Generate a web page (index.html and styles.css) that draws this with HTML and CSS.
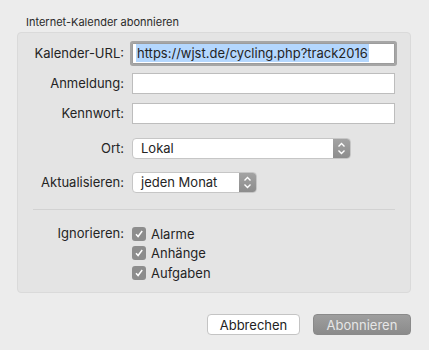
FILE: index.html
```html
<!DOCTYPE html>
<html>
<head>
  <title>Internet-Kalender abonnieren</title>
  <meta name="viewport" content="width=device-width, initial-scale=1.0">
  <link rel="stylesheet" href="styles.css">
</head>
<body>
  <div class="dialog">
    <div class="group-title">Internet-Kalender abonnieren</div>

    <!-- Group box -->
    <div class="group">
      <div class="row row-url">
        <label class="label">Kalender-URL:</label>
        <div class="field focused"><span class="selected">https://wjst.de/cycling.php?track2016</span></div>
      </div>
      <div class="row">
        <label class="label">Anmeldung:</label>
        <div class="field"></div>
      </div>
      <div class="row">
        <label class="label">Kennwort:</label>
        <div class="field"></div>
      </div>

      <div class="row row-popup">
        <label class="label">Ort:</label>
        <div class="popup popup-wide">
          <span class="popup-value">Lokal</span>
          <span class="stepper">
            <svg width="9" height="13" viewBox="0 0 9 13"><path d="M1.5 4.5 L4.5 1.5 L7.5 4.5 M1.5 8.5 L4.5 11.5 L7.5 8.5" fill="none" stroke="#fff" stroke-width="1.4"/></svg>
          </span>
        </div>
      </div>
      <div class="row row-popup2">
        <label class="label">Aktualisieren:</label>
        <div class="popup popup-narrow">
          <span class="popup-value">jeden Monat</span>
          <span class="stepper">
            <svg width="9" height="13" viewBox="0 0 9 13"><path d="M1.5 4.5 L4.5 1.5 L7.5 4.5 M1.5 8.5 L4.5 11.5 L7.5 8.5" fill="none" stroke="#fff" stroke-width="1.4"/></svg>
          </span>
        </div>
      </div>

      <div class="separator"></div>

      <div class="row row-check">
        <label class="label">Ignorieren:</label>
        <div class="checks">
          <div class="check">
            <span class="box"><svg width="10" height="10" viewBox="0 0 10 10"><path d="M2 5.2 L4.1 7.5 L8.2 2" fill="none" stroke="#fff" stroke-width="1.5"/></svg></span>
            Alarme
          </div>
          <div class="check">
            <span class="box"><svg width="10" height="10" viewBox="0 0 10 10"><path d="M2 5.2 L4.1 7.5 L8.2 2" fill="none" stroke="#fff" stroke-width="1.5"/></svg></span>
            Anhänge
          </div>
          <div class="check">
            <span class="box"><svg width="10" height="10" viewBox="0 0 10 10"><path d="M2 5.2 L4.1 7.5 L8.2 2" fill="none" stroke="#fff" stroke-width="1.5"/></svg></span>
            Aufgaben
          </div>
        </div>
      </div>
    </div>

    <!-- Buttons -->
    <div class="buttons">
      <button class="btn btn-cancel">Abbrechen</button>
      <button class="btn btn-default" disabled>Abonnieren</button>
    </div>
  </div>
</body>
</html>
```

FILE: styles.css
```css
/* Base */
* {
  box-sizing: border-box;
}

body, html {
  margin: 0;
  padding: 0;
  height: 100%;
  background: #ececec;
  font-family: Inter, 'Liberation Sans', Arial, sans-serif;
  font-size: 13px;
  color: #242424;
  overflow: hidden;
}

.dialog {
  padding: 0 18px 0 17px;
}

.group-title {
  font-size: 11px;
  color: #2a2a2a;
  padding: 15px 0 0 9px;
  height: 32px;
}

/* Group box */
.group {
  height: 261px;
  border: 1px solid #dadada;
  border-radius: 4px;
  background: #e4e4e4;
  padding-top: 9px;
}

.row {
  display: flex;
  align-items: center;
  height: 22px;
  margin-top: 8px;
}

.row-url {
  margin-top: 0;
}

.label {
  width: 107px;
  padding-right: 1px;
  text-align: right;
  flex-shrink: 0;
}

.field {
  margin-left: 7px;
  width: 263px;
  height: 21px;
  background: #fff;
  border: 1px solid #bdbdbd;
  display: flex;
  align-items: center;
  padding-left: 3px;
  white-space: nowrap;
  overflow: hidden;
}

.field.focused {
  border-color: #9c9c9c;
  box-shadow: 0 0 0 2px #a6a6a6;
  border-radius: 1px;
}

.selected {
  background: #b4d7fe;
  padding: 1px 1px;
  line-height: 16px;
}

/* Popups */
.row-popup {
  margin-top: 13px;
}

.row-popup2 {
  margin-top: 12px;
}

.popup {
  margin-left: 7px;
  height: 21px;
  display: flex;
  background: #fff;
  border: 1px solid #c6c6c6;
  border-radius: 4px;
  overflow: hidden;
}

.popup-wide {
  width: 219px;
}

.popup-narrow {
  width: 125px;
}

.popup-value {
  flex: 1;
  padding-left: 8px;
  line-height: 19px;
}

.stepper {
  width: 17px;
  background: linear-gradient(#a3a3a3, #8d8d8d);
  display: flex;
  align-items: center;
  justify-content: center;
}

.separator {
  margin: 16px 15px 0 15px;
  height: 1px;
  background: #d2d2d2;
}

/* Checkboxes */
.row-check {
  height: auto;
  align-items: flex-start;
  margin-top: 14px;
}

.row-check .label {
  line-height: 19px;
}

.checks {
  margin-left: 7px;
}

.check {
  display: flex;
  align-items: center;
  height: 19.5px;
}

.box {
  width: 14px;
  height: 14px;
  border-radius: 3px;
  background: #8d8d8d;
  display: inline-flex;
  align-items: center;
  justify-content: center;
  margin-right: 5px;
}

/* Buttons */
.buttons {
  display: flex;
  justify-content: flex-end;
  gap: 13px;
  margin-top: 21px;
}

.btn {
  height: 21px;
  font-family: inherit;
  font-size: 13px;
  border-radius: 4px;
  padding: 0;
}

.btn-cancel {
  width: 93px;
  background: #fff;
  border: 1px solid #c4c4c4;
  color: #222;
}

.btn-default {
  width: 98px;
  background: linear-gradient(#9e9e9e, #8b8b8b);
  border: 1px solid #8a8a8a;
  color: #e6e6e6;
}
```
